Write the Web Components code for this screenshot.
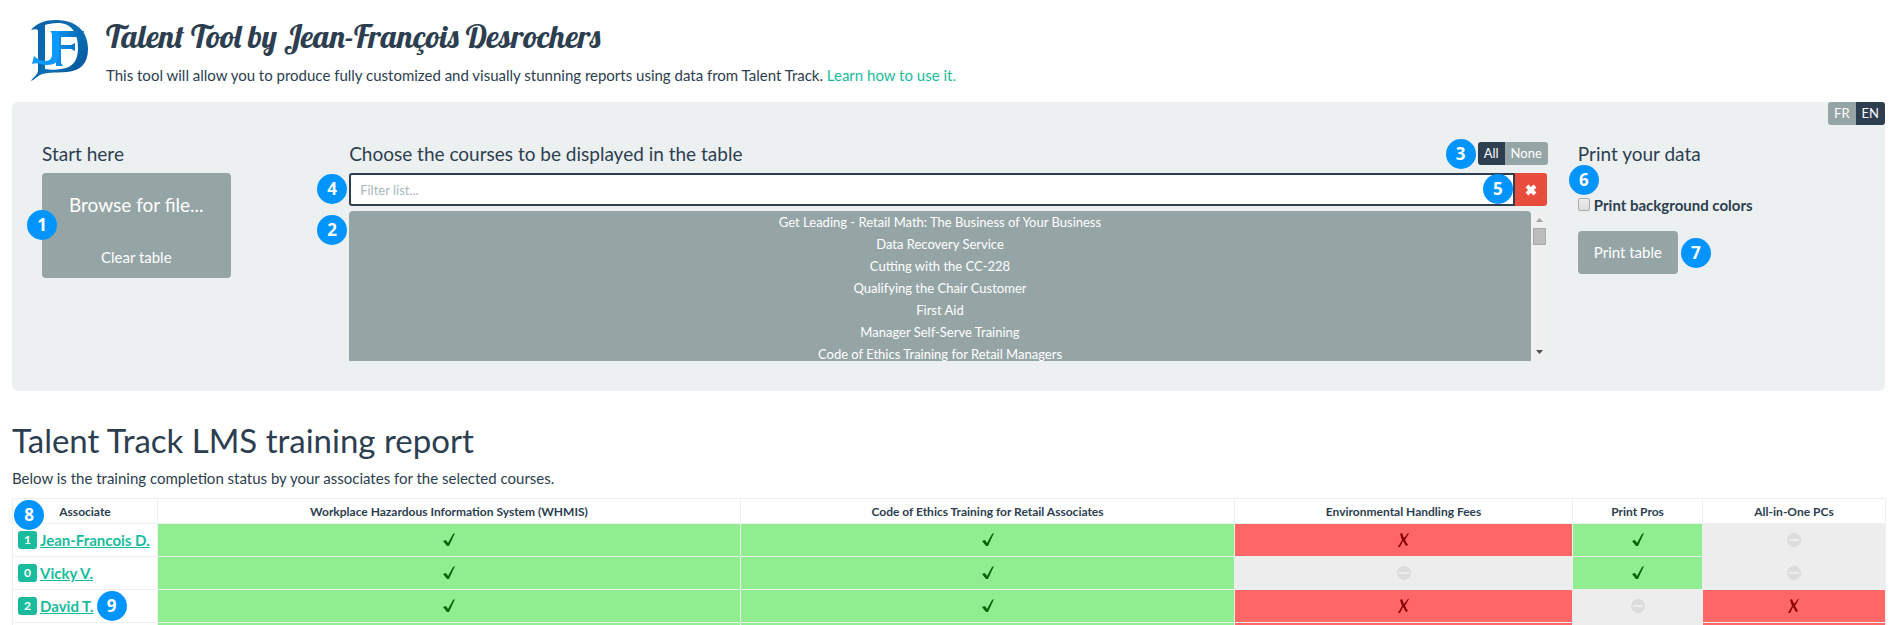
<!DOCTYPE html>
<html lang="en">
<head>
<meta charset="utf-8">
<title>Talent Tool</title>
<style>
body { margin: 0; padding: 0 15px 0 12px; background: #fff; color: #2c3e50; font: 15px/21px Lato, sans-serif; }
</style>
</head>
<body>
<talent-app></talent-app>
<script>
const define = (name, html, setup) => {
  const template = document.createElement('template');
  template.innerHTML = html;
  customElements.define(name, class extends HTMLElement {
    connectedCallback() {
      if (this.shadowRoot) return;
      this.attachShadow({ mode: 'open' }).append(template.content.cloneNode(true));
      if (setup) setup(this, this.shadowRoot);
    }
  });
};

define('step-marker', `
<style>
:host { position: absolute; z-index: 2; width: 30px; height: 30px; border-radius: 50%; background: #0094ff; color: #fff; font: bold 17px/30px "Open Sans", sans-serif; text-align: center; }
</style><slot></slot>`);

define('jfd-logo', `
<style>:host { display: block; width: 60px; height: 64px; } svg { display: block; }</style>
<svg width="60" height="64" viewBox="0 0 60 64" role="img" aria-label="JFD">
  <defs>
    <linearGradient id="d" x1="0" y1="0" x2="1" y2="1"><stop offset="0" stop-color="#0a5fa8"/><stop offset=".55" stop-color="#0a6fb4"/><stop offset="1" stop-color="#044d90"/></linearGradient>
    <linearGradient id="f" x1="0" y1="0" x2="1" y2="0"><stop offset="0" stop-color="#0b8ff0"/><stop offset="1" stop-color="#0b67b0"/></linearGradient>
  </defs>
  <path fill="url(#d)" fill-rule="evenodd" d="M1 11C7 4 15 1 26 1C46 1 58 12 58 30C58 45 50 52 37 53C24 54 16 53 10 56C6 58 4 61 1 62C3 58 8 56 8 51V12C8 10 5 10 1 11ZM15 6V50C21 51 25 51 31 50C43 49 48 41 48 29C48 12 40 4 28 4C22 4 18 5 15 6Z"/>
  <path fill="url(#f)" d="M26 12H54L52 20C50 18 48 18 45 18H31V26H41L45 24V32L41 30H31V44L33 47H26Z"/>
  <path fill="#0b98ff" d="M20 12H31L29 15V36C29 43 24 46 17 46C11 46 7 43 2 45L4 37C8 41 12 42 16 42C20 42 22 39 22 35V16C22 14 21 13 20 12Z"/>
</svg>`);

define('page-header', `
<style>
:host { display: flex; gap: 16px; padding: 19px 0 0 18px; box-sizing: border-box; height: 102px; }
h1 { margin: 0; font: 32px/35px Lobster, Lato, sans-serif; }
p { margin: 11px 0 0; }
a { color: #18bc9c; text-decoration: none; }
</style>
<jfd-logo></jfd-logo>
<div><h1>Talent Tool by Jean-François Desrochers</h1>
<p>This tool will allow you to produce fully customized and visually stunning reports using data from Talent Track. <a href="#help">Learn how to use it.</a></p></div>`);

define('toggle-group', `
<style>
:host { display: inline-flex; border-radius: 3px; overflow: hidden; }
button { border: 0; margin: 0; padding: 0 6px; height: 23px; background: #95a5a6; color: #fff; font: 13px/23px Lato, sans-serif; }
button.on { background: #2c3e50; }
</style>`, (host, root) => {
  host.getAttribute('options').split(',').forEach(label => {
    const b = document.createElement('button');
    b.type = 'button';
    b.textContent = label;
    const on = label === host.getAttribute('value');
    b.classList.toggle('on', on);
    b.setAttribute('aria-pressed', on);
    root.append(b);
  });
});

define('file-actions', `
<style>
:host { display: block; position: relative; }
.box { display: inline-flex; flex-direction: column; border-radius: 4px; overflow: hidden; background: #95a5a6; }
button { border: 0; margin: 0; background: none; color: #fff; font: 15px/21px Lato, sans-serif; padding: 10px 15px; height: 42px; }
.big { font-size: 19px; line-height: 27px; padding: 18px 27px; height: 63px; }
step-marker { left: -15px; top: 37px; }
</style>
<div class="box"><button type="button" class="big">Browse for file...</button><button type="button">Clear table</button></div>
<step-marker>1</step-marker>`);

define('course-list', `
<style>
:host { display: flex; position: relative; height: 150px; overflow: visible; }
ul { flex: 1; margin: 0; padding: 0; list-style: none; overflow: hidden; border-radius: 4px 4px 0 0; background: #95a5a6; }
li button { display: block; width: 100%; border: 0; padding: 0; background: none; color: #fff; font: 13px/22px Lato, sans-serif; height: 22px; }
.bar { width: 17px; box-sizing: border-box; display: flex; flex-direction: column; align-items: center; justify-content: space-between; padding: 6px 0; background: #f0f0f0; }
.top { display: flex; flex-direction: column; align-items: center; gap: 6px; }
.thumb { width: 13px; height: 17px; box-sizing: border-box; background: #bcbcbc; border: 1px solid #a8a8a8; }
svg { display: block; }
step-marker { left: -32px; top: 4px; }
</style>
<ul></ul>
<div class="bar" aria-hidden="true">
  <div class="top"><svg width="7" height="5"><path d="M0 5L3.500 1L7 5Z" fill="#a3a3a3"/></svg><div class="thumb"></div></div>
  <svg width="7" height="5"><path d="M0 0H7L3.500 4Z" fill="#505050"/></svg>
</div>
<step-marker>2</step-marker>`, (host, root) => {
  const ul = root.querySelector('ul');
  ['Get Leading - Retail Math: The Business of Your Business', 'Data Recovery Service', 'Cutting with the CC-228', 'Qualifying the Chair Customer', 'First Aid', 'Manager Self-Serve Training', 'Code of Ethics Training for Retail Managers'].forEach(name => {
    const li = document.createElement('li'), b = document.createElement('button');
    b.type = 'button';
    b.textContent = name;
    li.append(b);
    ul.append(li);
  });
});

define('course-filter', `
<style>
:host { display: flex; position: relative; margin-bottom: 5px; padding-right: 1px; }
input { flex: 1; min-width: 0; box-sizing: border-box; height: 33px; margin: 0; padding: 0 9px; border: 2px solid #2c3e50; border-radius: 3px 0 0 3px; background: #fff; color: #2c3e50; font: 13px/19px Lato, sans-serif; outline: 0; }
input::placeholder { color: #acb6c0; opacity: 1; }
button { width: 32px; height: 33px; border: 0; padding: 0; border-radius: 0 3px 3px 0; background: #e74c3c; display: grid; place-items: center; }
.clear { right: 35px; top: 1px; }
.filter { left: -32px; top: 1px; }
</style>
<input type="text" placeholder="Filter list..." aria-label="Filter list">
<button type="button" aria-label="Clear filter"><svg width="12" height="12" viewBox="0 0 12 12"><path d="M2 2L10 10M10 2L2 10" stroke="#fff" stroke-width="4"/></svg></button>
<step-marker class="filter">4</step-marker><step-marker class="clear">5</step-marker>`);

define('print-options', `
<style>
:host { display: block; position: relative; }
label { display: flex; align-items: center; gap: 4px; padding-top: 22px; font-weight: bold; }
input { appearance: none; box-sizing: border-box; width: 12px; height: 13px; margin: 0 0 3px; border: 1px solid #acacac; border-radius: 2px; background: linear-gradient(#eee, #dcdcdc); }
.print { display: flex; align-items: center; gap: 3px; margin-top: 15px; }
button { border: 0; margin: 0; padding: 10px 16px; height: 43px; border-radius: 4px; background: #95a5a6; color: #fff; font: 15px/21px Lato, sans-serif; }
.six { left: -9px; top: -8px; }
.print step-marker { position: static; }
</style>
<label><input type="checkbox">Print background colors</label>
<div class="print"><button type="button">Print table</button><step-marker>7</step-marker></div>
<step-marker class="six">6</step-marker>`);

define('control-panel', `
<style>
:host { display: grid; grid-template-columns: repeat(12, minmax(0, 1fr)); column-gap: 30px; position: relative; box-sizing: border-box; padding: 38px 30px 30px; background: #ecf0f1; border-radius: 6px; }
section { grid-column: span 2; }
.wide { grid-column: span 8; }
.head { display: flex; justify-content: space-between; align-items: center; height: 27px; margin-bottom: 6px; }
h2 { margin: 0; font: 19px/27px Lato, sans-serif; }
.lang { position: absolute; top: 0; right: 0; }
.tools { display: flex; align-items: center; gap: 2px; }
.tools step-marker { position: static; }
</style>
<section><div class="head"><h2>Start here</h2></div><file-actions></file-actions></section>
<section class="wide"><div class="head"><h2>Choose the courses to be displayed in the table</h2>
<div class="tools"><step-marker>3</step-marker><toggle-group options="All,None" value="All"></toggle-group></div></div>
<course-filter></course-filter><course-list></course-list></section>
<section><div class="head"><h2>Print your data</h2></div><print-options></print-options></section>
<toggle-group class="lang" options="FR,EN" value="EN"></toggle-group>`);

define('training-report', `
<style>
:host { display: block; padding-top: 28px; }
h2 { margin: 0; font: 33px/42px Lato, sans-serif; }
p { margin: 7px 0 9px; }
.wrap { position: relative; }
table { width: 100%; table-layout: fixed; border-collapse: collapse; }
th, td { border: 1px solid #ecf0f1; padding: 0; height: 32px; text-align: center; }
thead th { height: 24px; font: bold 12px/17px Lato, sans-serif; }
thead th:first-child { padding-left: 0; }
tbody th { text-align: left; font-weight: bold; padding-left: 5px; white-space: nowrap; }
.row { display: flex; align-items: center; gap: 3px; }
.count { width: 19px; height: 18px; border-radius: 3px; background: #18bc9c; color: #fff; font: bold 12px/18px Lato, sans-serif; text-align: center; }
a { color: #18bc9c; }
.yes { background: #90ee90; } .no { background: #f66; } .na { background: #ededed; }
svg { display: block; margin: auto; }
.eight { left: 2px; top: 2px; }
.row step-marker { position: static; }
</style>
<h2>Talent Track LMS training report</h2>
<p>Below is the training completion status by your associates for the selected courses.</p>
<div class="wrap">
<table>
<colgroup><col width="145"><col width="583"><col width="494"><col width="338"><col width="130"><col width="183"></colgroup>
<thead><tr><th scope="col">Associate</th><th scope="col">Workplace Hazardous Information System (WHMIS)</th><th scope="col">Code of Ethics Training for Retail Associates</th><th scope="col">Environmental Handling Fees</th><th scope="col">Print Pros</th><th scope="col">All-in-One PCs</th></tr></thead>
<tbody></tbody>
</table>
<step-marker class="eight">8</step-marker>
</div>`, (host, root) => {
  const icons = {
    yes: '<svg width="12" height="14" viewBox="0 0 12 14" role="img" aria-label="Completed"><path d="M0 8L3 7L5 10L10 1L12 0L6 13H4Z" fill="#006400"/></svg>',
    no: '<svg width="12" height="14" viewBox="0 0 12 14" role="img" aria-label="Not completed"><path d="M2 1L4 0L6 5L10 0H11L7 7L10 12L8 13L5 8L2 14H0L4 7Z" fill="#8b0000"/></svg>',
    na: '<svg width="14" height="14" viewBox="0 0 14 14" role="img" aria-label="Not assigned"><circle cx="7" cy="7" r="7" fill="#dcdcdc"/><path d="M2 6H12V8H2Z" fill="#ededed"/></svg>'
  };
  const rows = [
    ['1', 'Jean-Francois D.', 'yes yes no yes na'],
    ['0', 'Vicky V.', 'yes yes na yes na'],
    ['2', 'David T.', 'yes yes no na no', '9'],
    ['', '', 'yes yes no na no']
  ];
  root.querySelector('tbody').innerHTML = rows.map(([n, name, states, step]) =>
    '<tr><th scope="row">' + (name ? `<div class="row"><span class="count">${n}</span><a href="#associate">${name}</a>${step ? `<step-marker>${step}</step-marker>` : ''}</div>` : '') + '</th>' +
    states.split(' ').map(s => `<td class="${s}">${name ? icons[s] : ''}</td>`).join('') + '</tr>').join('');
});

define('talent-app', `
<style>:host { display: block; }</style>
<page-header></page-header>
<control-panel></control-panel>
<training-report></training-report>`);
</script>
</body>
</html>
